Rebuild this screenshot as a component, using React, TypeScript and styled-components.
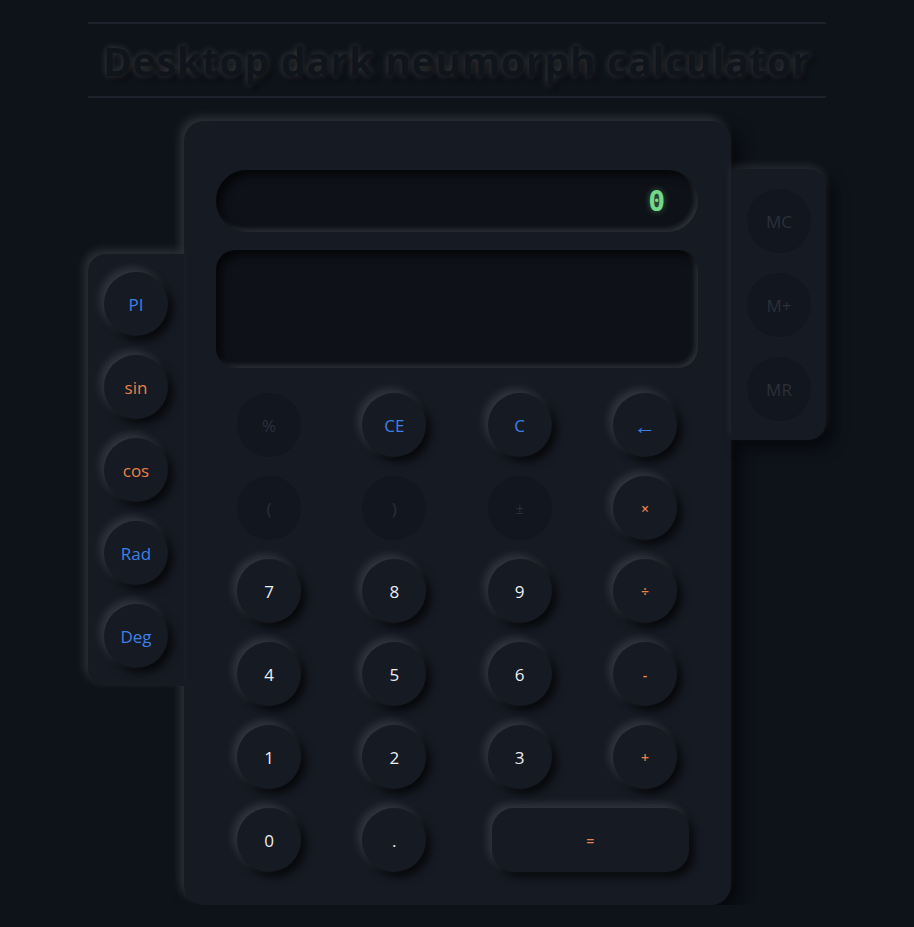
import React from "react";
import styled, { createGlobalStyle, css } from "styled-components";

const GlobalStyle = createGlobalStyle`
  html, body {
    margin: 0;
    padding: 0;
    background: #0e1219;
  }
  body {
    font-family: "Open Sans", "Noto Sans", sans-serif;
    padding-top: 22px;
  }
  * { box-sizing: border-box; }
`;

const Page = styled.div`
  width: 738px;
  margin: 0 auto;
  display: flex;
  flex-direction: column;
`;

const Header = styled.h1`
  margin: 0;
  height: 76px;
  padding-top: 1px;
  border-top: 2px solid #1c212b;
  border-bottom: 2px solid #1c212b;
  display: flex;
  align-items: center;
  justify-content: center;
  font-family: "Open Sans", sans-serif;
  font-weight: 700;
  font-size: 39px;
  letter-spacing: 0.8px;
  color: #10141b;
  text-shadow: 0 0 7px rgba(255, 255, 255, 0.22), 3px 3px 5px rgba(0, 0, 0, 0.85);
`;

const CalcRow = styled.div`
  margin-top: 23px;
  display: flex;
  align-items: flex-start;
`;

const SidePanel = styled.div<{ $side: "left" | "right"; $top: number; $gap: number }>`
  position: relative;
  z-index: 1;
  margin-top: ${(p) => p.$top}px;
  background: #161a23;
  display: flex;
  flex-direction: column;
  gap: ${(p) => p.$gap}px;
  ${(p) =>
    p.$side === "left"
      ? css`
          width: 96px;
          padding: 18px 16px 18px 16px;
          border-radius: 18px 0 0 18px;
          box-shadow: -4px -4px 10px rgba(255, 255, 255, 0.13);
        `
      : css`
          width: 95px;
          padding: 20px 15px 19px 16px;
          border-radius: 0 18px 18px 0;
          box-shadow: 0 -4px 8px rgba(255, 255, 255, 0.1), 8px 8px 14px rgba(0, 0, 0, 0.55);
        `}
`;

const Body = styled.div`
  width: 547px;
  background: #161a23;
  border-radius: 20px;
  padding: 49px 33px 33px 32px;
  display: flex;
  flex-direction: column;
  box-shadow: -4px -4px 10px rgba(255, 255, 255, 0.14), 8px 8px 16px rgba(0, 0, 0, 0.6);
`;

const Screen = styled.div<{ $h: number; $r: number }>`
  height: ${(p) => p.$h}px;
  border-radius: ${(p) => p.$r}px;
  background: #0e1118;
  box-shadow: inset 5px 5px 8px rgba(0, 0, 0, 0.7), inset -3px -3px 5px rgba(255, 255, 255, 0.13);
`;

const MainScreen = styled(Screen)`
  display: flex;
  align-items: center;
  justify-content: flex-end;
  padding-right: 33px;
  margin-bottom: 18px;
`;

const Readout = styled.span`
  font-family: "DejaVu Sans Mono", "Liberation Mono", monospace;
  font-size: 28px;
  font-weight: bold;
  color: #74d88a;
  text-shadow: 0 0 6px rgba(110, 220, 130, 0.45);
`;

const Keypad = styled.div`
  margin-top: 25px;
  padding: 0 21px 0 21px;
  display: grid;
  grid-template-columns: repeat(4, 64px);
  justify-content: space-between;
  row-gap: 19px;
`;

type Tone = "num" | "blue" | "orange" | "dim";
type Size = "md" | "sm" | "lg";

const toneColor: Record<Tone, string> = {
  num: "#eceef2",
  blue: "#3f80e4",
  orange: "#e8824a",
  dim: "#2b303a",
};

const sizePx: Record<Size, string> = { md: "17px", sm: "14px", lg: "22px" };

const Key = styled.button<{ $tone: Tone; $size?: Size }>`
  width: 64px;
  height: 64px;
  border-radius: 50%;
  border: none;
  padding: 0;
  display: flex;
  align-items: center;
  justify-content: center;
  font-family: "Open Sans", sans-serif;
  font-size: ${(p) => sizePx[p.$size ?? "md"]};
  font-weight: ${(p) => (p.$size === "sm" && p.$tone === "orange" ? 600 : 400)};
  color: ${(p) => toneColor[p.$tone]};
  ${(p) =>
    p.$tone === "dim"
      ? css`
          background: #12161e;
          box-shadow: none;
        `
      : css`
          background: #161a23;
          box-shadow: -4px -4px 8px rgba(255, 255, 255, 0.13), 5px 5px 9px rgba(0, 0, 0, 0.7);
        `}
`;

const WideKey = styled(Key)`
  grid-column: 3 / span 2;
  width: 197px;
  border-radius: 22px;
  margin-left: 4px;
`;

type K = { label: string; tone: Tone; size?: Size };

const keys: K[] = [
  { label: "%", tone: "dim" },
  { label: "CE", tone: "blue" },
  { label: "C", tone: "blue" },
  { label: "←", tone: "blue", size: "lg" },
  { label: "(", tone: "dim" },
  { label: ")", tone: "dim" },
  { label: "±", tone: "dim", size: "sm" },
  { label: "×", tone: "orange", size: "sm" },
  { label: "7", tone: "num" },
  { label: "8", tone: "num" },
  { label: "9", tone: "num" },
  { label: "÷", tone: "orange", size: "sm" },
  { label: "4", tone: "num" },
  { label: "5", tone: "num" },
  { label: "6", tone: "num" },
  { label: "-", tone: "orange", size: "sm" },
  { label: "1", tone: "num" },
  { label: "2", tone: "num" },
  { label: "3", tone: "num" },
  { label: "+", tone: "orange", size: "sm" },
  { label: "0", tone: "num" },
  { label: ".", tone: "num" },
];

const leftKeys: K[] = [
  { label: "PI", tone: "blue" },
  { label: "sin", tone: "orange" },
  { label: "cos", tone: "orange" },
  { label: "Rad", tone: "blue" },
  { label: "Deg", tone: "blue" },
];

const rightKeys: K[] = [
  { label: "MC", tone: "dim" },
  { label: "M+", tone: "dim" },
  { label: "MR", tone: "dim" },
];

export default function App() {
  return (
    <>
      <GlobalStyle />
      <Page>
        <Header>Desktop dark neumorph calculator</Header>
        <CalcRow>
          <SidePanel $side="left" $top={133} $gap={19}>
            {leftKeys.map((k) => (
              <Key key={k.label} $tone={k.tone}>
                {k.label}
              </Key>
            ))}
          </SidePanel>
          <Body>
            <MainScreen $h={62} $r={31}>
              <Readout>0</Readout>
            </MainScreen>
            <Screen $h={118} $r={20} />
            <Keypad>
              {keys.map((k) => (
                <Key key={k.label} $tone={k.tone} $size={k.size}>
                  {k.label}
                </Key>
              ))}
              <WideKey $tone="orange" $size="sm">
                =
              </WideKey>
            </Keypad>
          </Body>
          <SidePanel $side="right" $top={48} $gap={20}>
            {rightKeys.map((k) => (
              <Key key={k.label} $tone={k.tone}>
                {k.label}
              </Key>
            ))}
          </SidePanel>
        </CalcRow>
      </Page>
    </>
  );
}
